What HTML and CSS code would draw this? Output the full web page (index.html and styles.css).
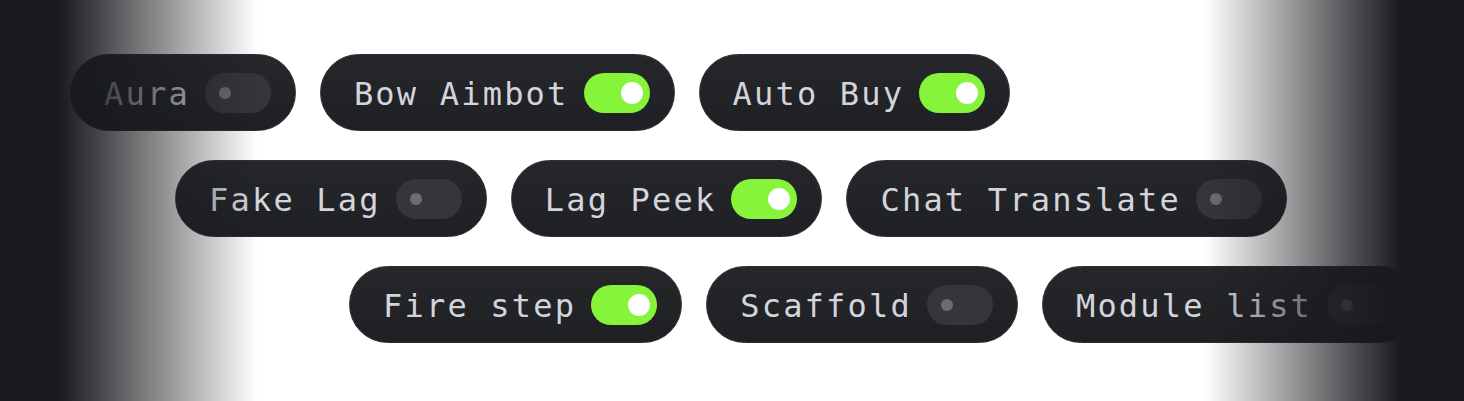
FILE: index.html
```html
<!DOCTYPE html>
<html lang="en">
<head>
    <meta charset="UTF-8">
    <meta name="viewport" content="width=device-width, initial-scale=1.0">
    <title>Modules</title>
    <link rel="stylesheet" href="styles.css">
</head>
<body>

    <div class="stage">
        <div class="row row-1">
            <div class="pill"><span class="label">Aura</span><span class="toggle"></span></div>
            <div class="pill"><span class="label">Bow Aimbot</span><span class="toggle on"></span></div>
            <div class="pill"><span class="label">Auto Buy</span><span class="toggle on"></span></div>
        </div>
        <div class="row row-2">
            <div class="pill"><span class="label">Fake Lag</span><span class="toggle"></span></div>
            <div class="pill"><span class="label">Lag Peek</span><span class="toggle on"></span></div>
            <div class="pill"><span class="label">Chat Translate</span><span class="toggle"></span></div>
        </div>
        <div class="row row-3">
            <div class="pill"><span class="label">Fire step</span><span class="toggle on"></span></div>
            <div class="pill"><span class="label">Scaffold</span><span class="toggle"></span></div>
            <div class="pill"><span class="label">Module list</span><span class="toggle"></span></div>
        </div>

        <!-- fade to dark at both edges -->
        <div class="fade"></div>
    </div>

</body>
</html>
```

FILE: styles.css
```css
/* Reset */
* {
    margin: 0;
    padding: 0;
    box-sizing: border-box;
}

body {
    background-color: #ffffff;
    font-family: 'DejaVu Sans Mono', 'Liberation Mono', monospace;
    overflow: hidden;
}

.stage {
    position: relative;
    width: 1464px;
    height: 401px;
    padding-top: 54px;
    display: flex;
    flex-direction: column;
    gap: 29px;
    overflow: hidden;
}

/* Rows */
.row {
    display: flex;
    gap: 24px;
    white-space: nowrap;
}

.row-1 { padding-left: 70px; }
.row-2 { padding-left: 175px; }
.row-3 { padding-left: 349px; }

/* Pill */
.pill {
    flex: none;
    height: 77px;
    display: flex;
    align-items: center;
    gap: 15px;
    padding: 0 24px 0 33px;
    border-radius: 39px;
    background: linear-gradient(#26272b, #1f2024);
    border: 1px solid #2e2f34;
}

.label {
    font-size: 32px;
    letter-spacing: 2.2px;
    color: #d3d4dc;
    padding-top: 2px;
}

/* Toggle */
.toggle {
    position: relative;
    width: 66px;
    height: 40px;
    border-radius: 20px;
    background-color: #35363b;
}

.toggle::after {
    content: '';
    position: absolute;
    left: 14px;
    top: 14px;
    width: 12px;
    height: 12px;
    border-radius: 50%;
    background-color: #6c6d73;
}

.toggle.on {
    background-color: #86f43a;
}

.toggle.on::after {
    left: auto;
    right: 7px;
    top: 9px;
    width: 22px;
    height: 22px;
    background-color: #ffffff;
}

/* Edge fade */
.fade {
    position: absolute;
    inset: 0;
    pointer-events: none;
    background: linear-gradient(to right,
        #18191d 0px,
        #18191d 58px,
        rgba(24, 25, 29, 0.75) 110px,
        rgba(24, 25, 29, 0) 258px,
        rgba(24, 25, 29, 0) 1205px,
        rgba(24, 25, 29, 0.75) 1350px,
        #18191d 1402px,
        #18191d 1464px);
}
```
